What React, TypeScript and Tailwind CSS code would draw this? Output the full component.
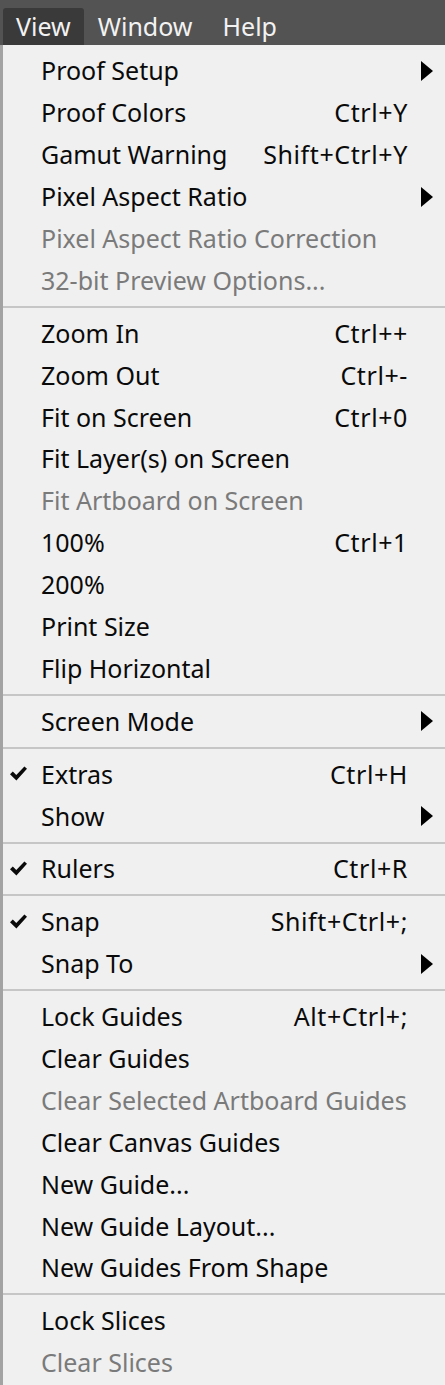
type Item = {
  label: string;
  shortcut?: string;
  sub?: boolean;
  disabled?: boolean;
  checked?: boolean;
};

const sections: Item[][] = [
  [
    { label: "Proof Setup", sub: true },
    { label: "Proof Colors", shortcut: "Ctrl+Y" },
    { label: "Gamut Warning", shortcut: "Shift+Ctrl+Y" },
    { label: "Pixel Aspect Ratio", sub: true },
    { label: "Pixel Aspect Ratio Correction", disabled: true },
    { label: "32-bit Preview Options...", disabled: true },
  ],
  [
    { label: "Zoom In", shortcut: "Ctrl++" },
    { label: "Zoom Out", shortcut: "Ctrl+-" },
    { label: "Fit on Screen", shortcut: "Ctrl+0" },
    { label: "Fit Layer(s) on Screen" },
    { label: "Fit Artboard on Screen", disabled: true },
    { label: "100%", shortcut: "Ctrl+1" },
    { label: "200%" },
    { label: "Print Size" },
    { label: "Flip Horizontal" },
  ],
  [{ label: "Screen Mode", sub: true }],
  [
    { label: "Extras", shortcut: "Ctrl+H", checked: true },
    { label: "Show", sub: true },
  ],
  [{ label: "Rulers", shortcut: "Ctrl+R", checked: true }],
  [
    { label: "Snap", shortcut: "Shift+Ctrl+;", checked: true },
    { label: "Snap To", sub: true },
  ],
  [
    { label: "Lock Guides", shortcut: "Alt+Ctrl+;" },
    { label: "Clear Guides" },
    { label: "Clear Selected Artboard Guides", disabled: true },
    { label: "Clear Canvas Guides" },
    { label: "New Guide..." },
    { label: "New Guide Layout..." },
    { label: "New Guides From Shape" },
  ],
  [{ label: "Lock Slices" }, { label: "Clear Slices", disabled: true }],
];

function MenuRow({ item }: { item: Item }) {
  return (
    <div
      className={
        "relative flex h-[41.9px] items-center pl-[38px] pr-[37px] " +
        (item.disabled ? "text-[#7a7a7a]" : "text-[#0a0a0a]")
      }
    >
      {item.checked && (
        <svg
          className="absolute left-[7px] top-[13px]"
          width="17"
          height="15"
          viewBox="0 0 17 15"
        >
          <path d="M0 8.2 L2.8 5.6 L6.3 9 L14.4 0.4 L17 2.8 L6.4 14.6 Z" fill="#0a0a0a" />
        </svg>
      )}
      <span className="flex-1 whitespace-nowrap">{item.label}</span>
      {item.shortcut && (
        <span className="whitespace-nowrap tracking-[0.6px]">
          {item.shortcut}
        </span>
      )}
      {item.sub && (
        <svg
          className="absolute right-[12px] top-[11px]"
          width="12"
          height="20"
          viewBox="0 0 12 20"
        >
          <path d="M0 0 L12 10 L0 20 Z" fill="#000" />
        </svg>
      )}
    </div>
  );
}

export default function App() {
  return (
    <div
      className="w-[445px] h-[1385px] overflow-hidden bg-[#f0f0f0] text-[25px] leading-none"
      style={{ fontFamily: '"Noto Sans", "Open Sans", sans-serif' }}
    >
      <div className="flex h-[45px] items-end bg-[#535353] pl-[3px] text-[#f2f2f2] text-[25px]">
        <div className="flex h-[37px] items-center rounded-t-[3px] bg-[#3a3a3a] px-[13px]">
          View
        </div>
        <div className="flex h-[37px] items-center px-[14px]">Window</div>
        <div className="flex h-[37px] items-center px-[16px]">Help</div>
      </div>
      <div className="h-[1340px] border-l-[3px] border-[#a3a3a3] pt-[5px]">
        {sections.map((sec, i) => (
          <div key={i}>
            {i > 0 && (
              <div className="flex h-[11px] items-center">
                <div className="h-[2px] w-full bg-[#c6c6c6]" />
              </div>
            )}
            {sec.map((item) => (
              <MenuRow key={item.label} item={item} />
            ))}
          </div>
        ))}
      </div>
    </div>
  );
}
